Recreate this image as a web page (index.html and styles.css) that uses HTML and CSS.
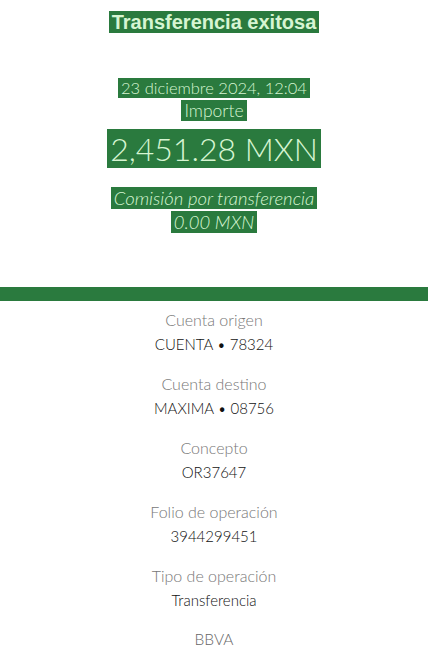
FILE: index.html
```html
<!DOCTYPE html>
<html lang="es">
<head>
  <meta charset="UTF-8" />
  <meta name="viewport" content="width=device-width, initial-scale=1.0"/>
  <title>Transferencia exitosa</title>
  <link rel="stylesheet" href="styles.css">
</head>
<body>

<div class="encabezado">
  <h1><span>Transferencia exitosa</span></h1>
  <p class="fecha"><span>23 diciembre 2024, 12:04</span></p>
  <p class="importe-label"><span>Importe</span></p>
  <p class="importe"><span>2,451.28 MXN</span></p>
  <p class="comision"><span>Comisión por transferencia</span></p>
  <p class="comision-valor"><span>0.00 MXN</span></p>
</div>

<div class="barra"></div>

<div class="detalle">
  <div class="item">
    <p class="label">Cuenta origen</p>
    <p class="valor">CUENTA • 78324</p>
  </div>
  <div class="item">
    <p class="label">Cuenta destino</p>
    <p class="valor">MAXIMA • 08756</p>
  </div>
  <div class="item">
    <p class="label">Concepto</p>
    <p class="valor">OR37647</p>
  </div>
  <div class="item">
    <p class="label">Folio de operación</p>
    <p class="valor">3944299451</p>
  </div>
  <div class="item">
    <p class="label">Tipo de operación</p>
    <p class="valor">Transferencia</p>
  </div>
  <p class="banco">BBVA</p>
</div>

</body>
</html>
```

FILE: styles.css
```css
body {
  margin: 0;
  background: white;
  font-family: Lato, "Noto Sans", sans-serif;
}

p, h1 {
  margin: 0;
}

.encabezado {
  text-align: center;
  padding-top: 10px;
  height: 277px;
  box-sizing: border-box;
}

.encabezado span {
  background: #2a7a3e;
  color: #d6f5d2;
  padding: 0 3px;
}

h1 {
  font-family: "Liberation Sans", Arial, sans-serif;
  font-size: 20px;
  font-weight: bold;
  line-height: 25px;
}

h1 span {
  color: #e6f4e6;
}

.fecha {
  margin-top: 44px;
  font-size: 16.5px;
  font-weight: 300;
  line-height: 19px;
}

.importe-label {
  margin-top: 3px;
  font-size: 17.5px;
  font-weight: 300;
  line-height: 20px;
}

.importe {
  margin-top: 7px;
  font-size: 32px;
  font-weight: 300;
  line-height: 42px;
}

.comision {
  margin-top: 17px;
  font-size: 18.5px;
  font-weight: 300;
  font-style: italic;
  line-height: 22px;
}

.comision-valor {
  margin-top: 2px;
  font-size: 18.5px;
  font-weight: 300;
  font-style: italic;
  line-height: 23px;
}

.barra {
  height: 14px;
  background: #2a7a3e;
  margin-top: 10px;
}

.detalle {
  text-align: center;
  padding-top: 9px;
}

.item {
  margin-bottom: 16px;
}

.label {
  color: #777;
  font-size: 16px;
  font-weight: 300;
  line-height: 20px;
}

.valor {
  color: #111;
  font-size: 15px;
  font-weight: 300;
  line-height: 28px;
}

.banco {
  color: #666;
  font-size: 15.5px;
  font-weight: 300;
  margin-top: 16px;
}
```
